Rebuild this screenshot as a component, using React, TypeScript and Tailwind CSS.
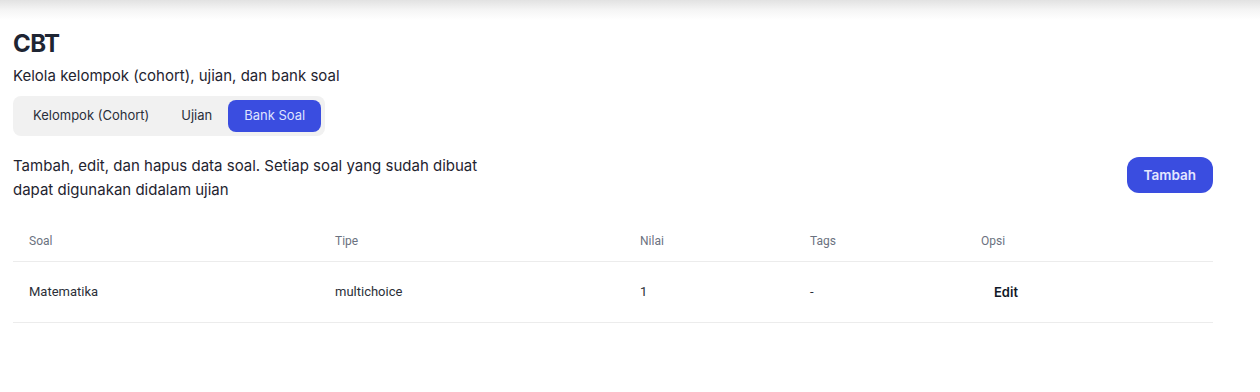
const columns = [
  { label: 'Soal', width: 'w-[306px]' },
  { label: 'Tipe', width: 'w-[305px]' },
  { label: 'Nilai', width: 'w-[170px]' },
  { label: 'Tags', width: 'w-[171px]' },
  { label: 'Opsi', width: '' },
];

const rows = [{ soal: 'Matematika', tipe: 'multichoice', nilai: '1', tags: '-' }];

const tabs = ['Kelompok (Cohort)', 'Ujian', 'Bank Soal'];

export default function App() {
  const active = 'Bank Soal';

  return (
    <div className="min-h-[392px] bg-white font-['Inter',sans-serif] text-[#1f2937]">
      {/* shadow cast by the top bar */}
      <div className="h-[20px] bg-linear-to-b from-[#e2e2e2] via-[#f5f5f5] to-white" />

      <main className="px-[13px] pt-[10px]">
        <h1 className="text-[24px] font-bold leading-7 tracking-tight text-[#1e2533]">CBT</h1>
        <p className="mt-[8px] text-[15px] leading-5 text-[#1f2430]">
          Kelola kelompok (cohort), ujian, dan bank soal
        </p>

        {/* Tabs */}
        <div className="mt-[10px] inline-flex items-center rounded-lg bg-[#f1f1f1] p-[4px]">
          {tabs.map((tab) => (
            <button
              key={tab}
              className={`h-[32px] rounded-lg px-[16px] text-[13px] ${
                tab === active ? 'bg-[#3a4de0] text-[#dfe3ff]' : 'text-[#2a2f3a]'
              }`}
            >
              {tab}
            </button>
          ))}
        </div>

        {/* Intro + action */}
        <div className="mt-[18px] flex w-[1200px] items-center justify-between">
          <p className="w-[500px] text-[15px] leading-6 text-[#1f2430]">
            Tambah, edit, dan hapus data soal. Setiap soal yang sudah dibuat dapat digunakan didalam ujian
          </p>
          <button className="mb-[6px] h-[36px] rounded-xl bg-[#3a4de0] px-[17px] text-[13.5px] font-semibold text-[#e3e7ff]">
            Tambah
          </button>
        </div>

        {/* Table */}
        <table className="mt-[21px] w-[1200px] border-collapse font-['Roboto',sans-serif]">
          <thead>
            <tr className="border-b border-[#ececec]">
              {columns.map((c) => (
                <th
                  key={c.label}
                  className={`${c.width} h-[38px] px-[16px] pb-[2px] text-left text-[12px] font-normal text-[#6b7280]`}
                >
                  {c.label}
                </th>
              ))}
            </tr>
          </thead>
          <tbody>
            {rows.map((r) => (
              <tr key={r.soal} className="border-b border-[#ececec]">
                <td className="h-[61px] px-[16px] text-[13px] text-[#2b2f38]">{r.soal}</td>
                <td className="px-[16px] text-[13px] text-[#2b2f38]">{r.tipe}</td>
                <td className="px-[16px] text-[13px] text-[#2b2f38]">{r.nilai}</td>
                <td className="px-[16px] text-[13px] text-[#2b2f38]">{r.tags}</td>
                <td className="px-[16px]">
                  <button className="px-[13px] font-['Inter',sans-serif] text-[13px] font-semibold text-[#111827]">
                    Edit
                  </button>
                </td>
              </tr>
            ))}
          </tbody>
        </table>
      </main>
    </div>
  );
}
